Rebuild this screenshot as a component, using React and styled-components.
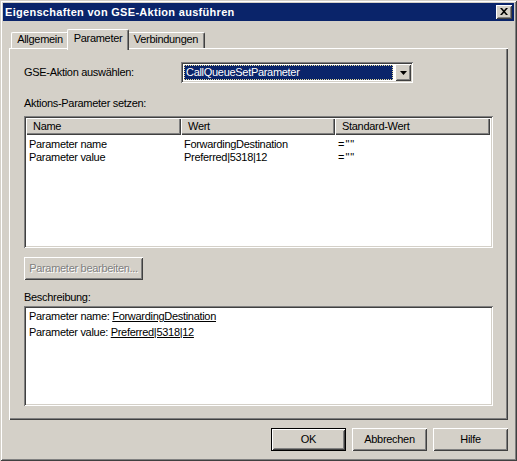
import React from 'react';
import styled, { createGlobalStyle } from 'styled-components';

const Global = createGlobalStyle`
  html, body { margin: 0; padding: 0; background: #d4d0c8; }
  * { box-sizing: border-box; }
`;

const raisedShadow = 'inset 1px 1px #fff, inset -1px -1px #404040, inset 2px 2px #d4d0c8, inset -2px -2px #808080';
const sunkenShadow = 'inset 1px 1px #808080, inset -1px -1px #fff, inset 2px 2px #404040, inset -2px -2px #d4d0c8';

const Window = styled.div`
  width: 517px;
  height: 461px;
  padding: 3px;
  display: flex;
  flex-direction: column;
  background: #d4d0c8;
  box-shadow: inset 1px 1px #d4d0c8, inset -1px -1px #404040, inset 2px 2px #fff, inset -2px -2px #808080;
  font-family: "Liberation Sans", Arial, sans-serif;
  font-size: 11px;
  letter-spacing: -0.3px;
  color: #000;
`;

const TitleBar = styled.div`
  height: 18px;
  flex: none;
  background: #0a246a;
  display: flex;
  align-items: center;
  justify-content: space-between;
  padding: 0 2px;
`;

const TitleText = styled.div`
  color: #fff;
  font-weight: bold;
  letter-spacing: 0.3px;
  line-height: 14px;
`;

const CloseButton = styled.div`
  width: 16px;
  height: 14px;
  background: #d4d0c8;
  box-shadow: ${raisedShadow};
  display: flex;
  align-items: center;
  justify-content: center;
  padding-bottom: 1px;
`;

const Body = styled.div`
  flex: 1;
  display: flex;
  flex-direction: column;
  padding: 8px 6px 0 6px;
`;

const TabStrip = styled.div`
  display: flex;
  align-items: flex-end;
  height: 19px;
  padding-left: 2px;
  flex: none;
`;

const Tab = styled.div`
  position: relative;
  z-index: ${p => (p.$active ? 2 : 0)};
  width: ${p => p.$w}px;
  height: ${p => (p.$active ? 21 : 16)}px;
  margin: ${p => (p.$active ? '0 -2px -2px -2px' : '0')};
  padding-top: ${p => (p.$active ? 2 : 0)}px;
  line-height: 13px;
  text-align: center;
  background: #d4d0c8;
  border-top: 1px solid #fff;
  border-left: 1px solid #fff;
  border-right: 1px solid #404040;
  border-top-left-radius: 2px;
  border-top-right-radius: 2px;
  box-shadow: inset -1px 0 #808080;
`;

const Panel = styled.div`
  position: relative;
  z-index: 1;
  flex: none;
  height: 372px;
  padding: 14px 15px 14px 15px;
  display: flex;
  flex-direction: column;
  background: #d4d0c8;
  box-shadow: inset 1px 1px #fff, inset -1px -1px #404040, inset -2px -2px #808080;
`;

const ComboRow = styled.div`
  display: flex;
  align-items: center;
  height: 21px;
`;

const RowLabel = styled.div`
  width: 157px;
  line-height: 13px;
`;

const Combo = styled.div`
  width: 232px;
  height: 21px;
  padding: 2px;
  display: flex;
  background: #fff;
  box-shadow: ${sunkenShadow};
`;

const ComboValue = styled.div`
  flex: 1;
  margin: 1px 2px 1px 1px;
  background: #0a246a;
  color: #fff;
  border: 1px dotted #e8dc9a;
  padding-left: 1px;
  line-height: 13px;
  white-space: nowrap;
  overflow: hidden;
`;

const ComboButton = styled.div`
  width: 16px;
  height: 17px;
  background: #d4d0c8;
  box-shadow: ${raisedShadow};
  display: flex;
  align-items: center;
  justify-content: center;
`;

const SectionLabel = styled.div`
  margin-top: ${p => p.$mt}px;
  line-height: 13px;
  height: 13px;
`;

const ListView = styled.div`
  margin-top: 6px;
  height: 132px;
  padding: 2px;
  background: #fff;
  box-shadow: ${sunkenShadow};
  display: flex;
  flex-direction: column;
`;

const Header = styled.div`
  display: flex;
  height: 17px;
  flex: none;
`;

const HeaderCell = styled.div`
  width: ${p => p.$w}px;
  height: 17px;
  line-height: 16px;
  padding-left: 7px;
  background: #d4d0c8;
  box-shadow: inset 1px 1px #fff, inset -1px -1px #404040, inset -2px -2px #808080;
`;

const Rows = styled.div`
  padding-top: 3px;
`;

const Row = styled.div`
  display: flex;
  height: 13px;
  line-height: 13px;
`;

const Cell = styled.div`
  width: ${p => p.$w}px;
  padding-left: 3px;
  white-space: nowrap;
  letter-spacing: ${p => (p.$wide ? '1px' : 'inherit')};
`;

const PushButton = styled.button`
  appearance: none;
  border: ${p => (p.$default ? '1px solid #000' : '0')};
  margin: 0;
  padding: 0 0 1px 0;
  font: inherit;
  letter-spacing: inherit;
  width: ${p => p.$w}px;
  height: 23px;
  background: #d4d0c8;
  box-shadow: ${raisedShadow};
  color: ${p => (p.disabled ? '#808080' : '#000')};
  text-shadow: ${p => (p.disabled ? '1px 1px #fff' : 'none')};
  text-align: center;
  line-height: 13px;
`;

const EditButton = styled(PushButton)`
  margin-top: 9px;
`;

const DescBox = styled.div`
  margin-top: 2px;
  height: 100px;
  padding: 2px 5px;
  background: #fff;
  box-shadow: ${sunkenShadow};
`;

const DescLine = styled.div`
  line-height: 16px;
  white-space: nowrap;
`;

const Link = styled.span`
  text-decoration: underline;
`;

const Footer = styled.div`
  display: flex;
  justify-content: flex-end;
  gap: 6px;
  margin-top: 8px;
`;

const cols = [155, 154, 155];

export default function App() {
  return (
    <>
      <Global />
      <Window>
        <TitleBar>
          <TitleText>Eigenschaften von GSE-Aktion ausführen</TitleText>
          <CloseButton>
            <svg width="8" height="7" viewBox="0 0 8 7">
              <path d="M0 0h2l2 2.3L6 0h2L5 3.5 8 7H6L4 4.7 2 7H0l3-3.5z" fill="#000" />
            </svg>
          </CloseButton>
        </TitleBar>
        <Body>
          <TabStrip>
            <Tab $w={58}>Allgemein</Tab>
            <Tab $w={62} $active>Parameter</Tab>
            <Tab $w={78}>Verbindungen</Tab>
          </TabStrip>
          <Panel>
            <ComboRow>
              <RowLabel>GSE-Aktion auswählen:</RowLabel>
              <Combo>
                <ComboValue>CallQueueSetParameter</ComboValue>
                <ComboButton>
                  <svg width="7" height="4" viewBox="0 0 7 4">
                    <path d="M0 0h7L3.5 4z" fill="#000" />
                  </svg>
                </ComboButton>
              </Combo>
            </ComboRow>
            <SectionLabel $mt={14}>Aktions-Parameter setzen:</SectionLabel>
            <ListView>
              <Header>
                <HeaderCell $w={cols[0]}>Name</HeaderCell>
                <HeaderCell $w={cols[1]}>Wert</HeaderCell>
                <HeaderCell $w={cols[2]}>Standard-Wert</HeaderCell>
              </Header>
              <Rows>
                <Row>
                  <Cell $w={cols[0]}>Parameter name</Cell>
                  <Cell $w={cols[1]}>ForwardingDestination</Cell>
                  <Cell $w={cols[2]} $wide>=""</Cell>
                </Row>
                <Row>
                  <Cell $w={cols[0]}>Parameter value</Cell>
                  <Cell $w={cols[1]}>Preferred|5318|12</Cell>
                  <Cell $w={cols[2]} $wide>=""</Cell>
                </Row>
              </Rows>
            </ListView>
            <EditButton $w={119} disabled>Parameter bearbeiten...</EditButton>
            <SectionLabel $mt={11}>Beschreibung:</SectionLabel>
            <DescBox>
              <DescLine>Parameter name: <Link>ForwardingDestination</Link></DescLine>
              <DescLine>Parameter value: <Link>Preferred|5318|12</Link></DescLine>
            </DescBox>
          </Panel>
          <Footer>
            <PushButton $w={75} $default>OK</PushButton>
            <PushButton $w={75}>Abbrechen</PushButton>
            <PushButton $w={75}>Hilfe</PushButton>
          </Footer>
        </Body>
      </Window>
    </>
  );
}
